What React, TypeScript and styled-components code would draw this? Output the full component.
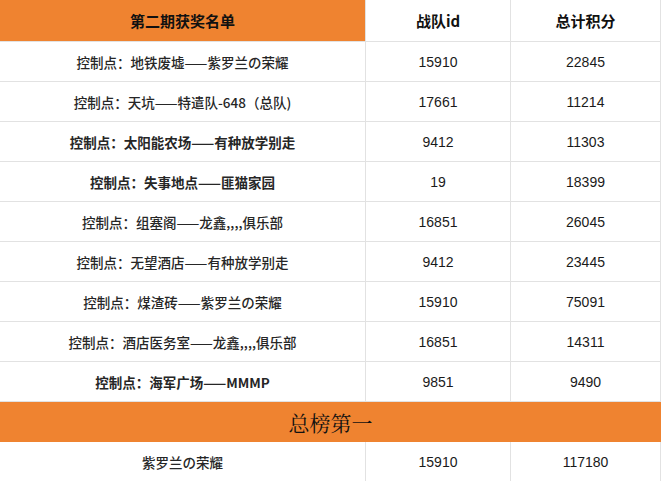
import styled, { createGlobalStyle } from 'styled-components';

const GlobalStyle = createGlobalStyle`
    body { margin: 0; background: #fff; font-family: 'Noto Sans CJK SC', sans-serif; color: #222; }
`;

const rows = [
    { name: '控制点：地铁废墟——紫罗兰の荣耀', id: '15910', score: '22845', bold: false },
    { name: '控制点：天坑——特遣队-648（总队)', id: '17661', score: '11214', bold: false },
    { name: '控制点：太阳能农场——有种放学别走', id: '9412', score: '11303', bold: true },
    { name: '控制点：失事地点——匪猫家园', id: '19', score: '18399', bold: true },
    { name: '控制点：组塞阁——龙鑫,,,,俱乐部', id: '16851', score: '26045', bold: false },
    { name: '控制点：无望酒店——有种放学别走', id: '9412', score: '23445', bold: false },
    { name: '控制点：煤渣砖——紫罗兰の荣耀', id: '15910', score: '75091', bold: false },
    { name: '控制点：酒店医务室——龙鑫,,,,俱乐部', id: '16851', score: '14311', bold: false },
    { name: '控制点：海军广场——MMMP', id: '9851', score: '9490', bold: true },
];

export default function App() {
    return (
        <Table>
            <GlobalStyle />
            <HeadCell $orange>第二期获奖名单</HeadCell>
            <HeadCell>战队id</HeadCell>
            <HeadCell>总计积分</HeadCell>
            {rows.map((r, i) => (
                <Row key={i}>
                    <NameCell $bold={r.bold}>{r.name}</NameCell>
                    <NumCell>{r.id}</NumCell>
                    <NumCell>{r.score}</NumCell>
                </Row>
            ))}
            {/* overall winner */}
            <Banner>总榜第一</Banner>
            <NameCell>紫罗兰の荣耀</NameCell>
            <NumCell>15910</NumCell>
            <NumCell>117180</NumCell>
        </Table>
    );
}

const Table = styled.div`
    display: grid;
    grid-template-columns: 366px 145px 150px;
    grid-auto-rows: 40px;
    grid-template-rows: 42px;
    width: 661px;
`;

const Row = styled.div`
    display: contents;
`;

const Cell = styled.div`
    display: flex;
    align-items: center;
    justify-content: center;
    border-right: 1px solid #e2e2e2;
    border-bottom: 1px solid #e2e2e2;
    box-sizing: border-box;
`;

const HeadCell = styled(Cell)<{ $orange?: boolean }>`
    background: ${(p) => (p.$orange ? '#ef8330' : '#fff')};
    font-weight: bold;
    font-size: 15px;
    color: #111;
`;

const NameCell = styled(Cell)<{ $bold?: boolean }>`
    font-size: 13.5px;
    font-weight: ${(p) => (p.$bold ? 'bold' : 500)};
    color: #262626;
`;

const NumCell = styled(Cell)`
    font-family: 'Liberation Sans', 'Noto Sans CJK SC', sans-serif;
    font-size: 14px;
    color: #1a1a1a;
`;

const Banner = styled.div`
    grid-column: 1 / -1;
    display: flex;
    align-items: center;
    justify-content: center;
    background: #ef8330;
    font-family: 'Noto Serif CJK SC', 'Liberation Serif', serif;
    font-size: 21px;
    color: #111;
`;
